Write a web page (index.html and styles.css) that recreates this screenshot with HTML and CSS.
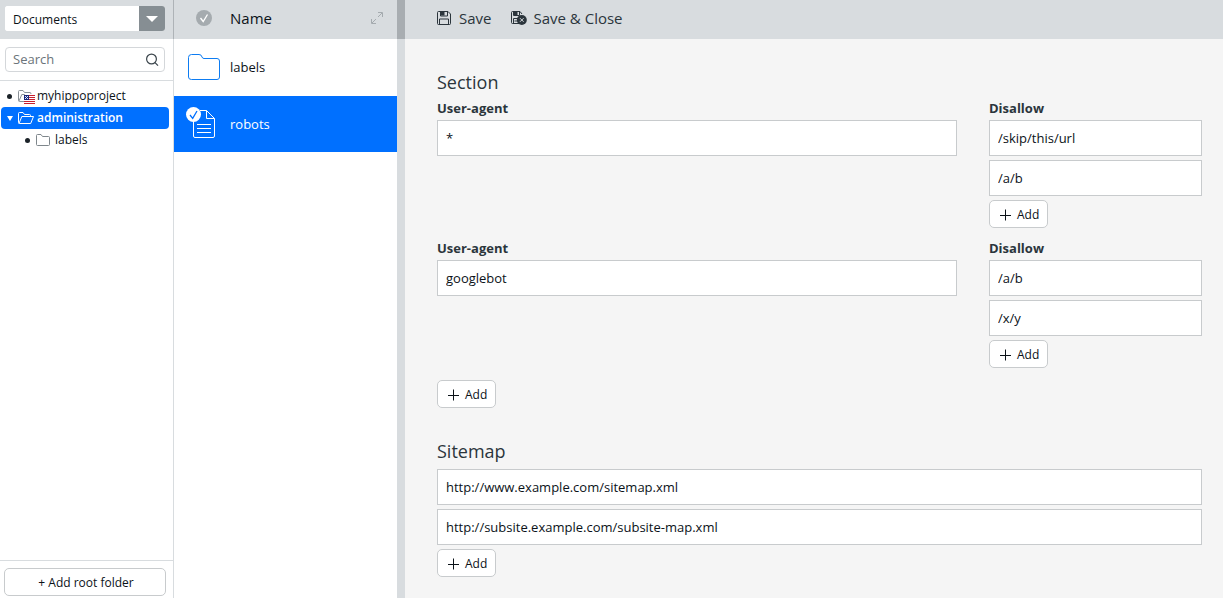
FILE: index.html
```html
<!DOCTYPE html>
<html lang="en">
<head>
<meta charset="utf-8">
<title>Documents - robots</title>
<link rel="stylesheet" href="styles.css">
</head>
<body>
<svg class="defs" aria-hidden="true">
  <symbol id="plus" viewBox="0 0 12 12"><path d="M5.500 .5v11M0 6.500h11" fill="none" stroke="currentColor"/></symbol>
  <symbol id="check" viewBox="0 0 16 16"><circle cx="8" cy="8" r="8" class="check-disc"/><path d="M4.500 8l2.700 3.500 4.300-7" class="check-mark"/></symbol>
</svg>
<div class="app">
  <aside class="sidebar">
    <header class="bar sidebar-bar">
      <div class="picker">
        <select class="picker-select" aria-label="Section"><option>Documents</option></select>
        <span class="picker-arrow"><svg width="12" height="6" viewBox="0 0 12 6"><path d="M0 0h12L6 6z" fill="#fff"/></svg></span>
      </div>
    </header>
    <form class="search">
      <input class="search-input" type="text" placeholder="Search" aria-label="Search">
      <button class="search-button" type="button" aria-label="Search"><svg width="14" height="14" viewBox="0 0 14 14" fill="none" stroke="#3a444b" stroke-width="1.2"><circle cx="6.500" cy="6" r="4.900"/><path d="M10 9.600l3 3"/></svg></button>
    </form>
    <ul class="tree">
      <li class="node">
        <span class="bullet"></span>
        <svg width="18" height="16" viewBox="0 0 18 16"><path d="M.5 12.500V3.500q0-1 1-1h3.500l1.500 2h5.500q1 0 1 1.500M1 13l2.800-6.500h3M.5 12.500q0 1 1 1h5" fill="none" stroke="#8b9298"/><rect x="6" y="7" width="11" height="9" fill="#fff"/><path d="M6 7.500h11M6 9.500h11M6 11.500h11M6 13.500h11M6 15.500h11" stroke="#c8202e"/><rect x="6" y="7" width="5" height="5" fill="#1b2a7a"/><path d="M7 8.500h1M9 8.500h1M8 9.500h1M7 10.500h1M9 10.500h1" stroke="#dfe4ff"/></svg>
        <span>myhippoproject</span>
      </li>
      <li class="node node-active">
        <svg class="caret" width="6" height="5" viewBox="0 0 6 5"><path d="M0 0h6L3 5z" fill="#fff"/></svg>
        <svg width="18" height="16" viewBox="0 0 18 16"><path d="M.5 12.500v-9q0-1 1-1h3.500l1.500 2h5q1 0 1 1v1M1 13.500l2.800-7h11.700l-2.800 7H1.500q-1 0-1-1" fill="none" stroke="#fff"/></svg>
        <span>administration</span>
      </li>
      <li class="node node-child">
        <span class="bullet"></span>
        <svg width="18" height="16" viewBox="0 0 18 16"><path d="M.5 3.500q0-1 1-1H5l1.500 2H12.500q1 0 1 1v7q0 1-1 1H1.500q-1 0-1-1z" fill="none" stroke="#7f878c"/></svg>
        <span>labels</span>
      </li>
    </ul>
    <footer class="sidebar-foot"><button class="button button-wide" type="button">+ Add root folder</button></footer>
  </aside>

  <section class="list">
    <header class="bar list-bar">
      <span class="list-icon"><svg class="check-grey" width="16" height="16"><use href="#check"/></svg></span>
      <span class="list-title">Name</span>
      <button class="icon-button" type="button" aria-label="Expand"><svg width="12" height="12" viewBox="0 0 12 12" fill="none" stroke="#a5abaf"><path d="M7 .5h4.500V5M11 1L7 5M.5 7v4.500H5M1 11l4-4"/></svg></button>
    </header>
    <ul class="rows">
      <li class="row">
        <span class="list-icon"><svg width="32" height="26" viewBox="0 0 32 26"><path d="M.5 3.500q0-3 3-3H11q2.500 0 3 2.500.500 1.500 2 1.500H29q2.500 0 2.500 2.500v16q0 2.500-2.500 2.500H3.500q-3 0-3-2.500z" fill="none" stroke="#0d7cf2"/></svg></span>
        <span>labels</span>
      </li>
      <li class="row row-active">
        <span class="list-icon"><svg width="36" height="34" viewBox="0 0 36 34"><path d="M14 3.500H20.500L28.500 11.500V29q0 1.500-1.500 1.500H9q-1.500 0-1.500-1.500V13M20.500 3.500V11.500H28.500M11 17.500h14M11 21.500h14M11 25.500h14" fill="none" stroke="#fff"/><circle cx="7.500" cy="7.500" r="7.500" fill="#fff"/><path d="M4 8l2.700 3.300L11 4" fill="none" stroke="#0070ff" stroke-width="1.300"/></svg></span>
        <span>robots</span>
      </li>
    </ul>
  </section>

  <div class="splitter"></div>

  <main class="editor">
    <header class="bar editor-bar">
      <button class="tool" type="button"><svg width="14" height="14" viewBox="0 0 14 14" fill="none" stroke="#2b353c"><path d="M1.500 .500H11L13.500 3v9.500q0 1-1 1h-11q-1 0-1-1v-11q0-1 1-1z"/><path d="M3.500 1v4h7V1M2.500 13V8h9v5"/><path d="M3.500 1h4v3.500h-4z" fill="#2b353c" stroke="none"/></svg>Save</button>
      <button class="tool tool-close" type="button"><svg width="16" height="14" viewBox="0 0 16 14" fill="none" stroke="#2b353c"><path d="M8 12.500H1.500q-1 0-1-1V1.500q0-1 1-1H9L11 3"/><path d="M2.500 1v3.500h6V1M2.500 12V7.500H8M3.500 10h3"/><path d="M3 1h3.500v3.500H3z" fill="#2b353c" stroke="none"/><circle cx="10.800" cy="9" r="5" fill="#2b353c" stroke="none"/><path d="M9 7.200l3.600 3.600M12.600 7.200L9 10.800" stroke="#d8dcdf"/></svg>Save &amp; Close</button>
    </header>
    <form class="form">
      <h2 class="heading">Section</h2>
      <div class="groups">
        <div class="group">
          <div class="field">
            <label class="label" for="agent-1">User-agent</label>
            <input class="input" id="agent-1" type="text" value="*">
          </div>
          <div class="field">
            <label class="label" for="disallow-1">Disallow</label>
            <div class="stack">
              <input class="input" id="disallow-1" type="text" value="/skip/this/url">
              <input class="input" type="text" aria-label="Disallow" value="/a/b">
              <button class="button" type="button"><svg width="12" height="12"><use href="#plus"/></svg>Add</button>
            </div>
          </div>
        </div>
        <div class="group">
          <div class="field">
            <label class="label" for="agent-2">User-agent</label>
            <input class="input" id="agent-2" type="text" value="googlebot">
          </div>
          <div class="field">
            <label class="label" for="disallow-2">Disallow</label>
            <div class="stack">
              <input class="input" id="disallow-2" type="text" value="/a/b">
              <input class="input" type="text" aria-label="Disallow" value="/x/y">
              <button class="button" type="button"><svg width="12" height="12"><use href="#plus"/></svg>Add</button>
            </div>
          </div>
        </div>
      </div>
      <button class="button" type="button"><svg width="12" height="12"><use href="#plus"/></svg>Add</button>
      <h2 class="heading heading-next">Sitemap</h2>
      <div class="stack">
        <input class="input" type="text" aria-label="Sitemap" value="http://www.example.com/sitemap.xml">
        <input class="input" type="text" aria-label="Sitemap" value="http://subsite.example.com/subsite-map.xml">
        <button class="button" type="button"><svg width="12" height="12"><use href="#plus"/></svg>Add</button>
      </div>
    </form>
  </main>
</div>
</body>
</html>
```
FILE: styles.css
```css
* { box-sizing: border-box; }
body { margin: 0; font: 13px/20px "Open Sans", sans-serif; color: #0b1218; background: #fff; }
button, input, select { font: inherit; color: inherit; }
ul { list-style: none; margin: 0; padding: 0; }
svg { display: block; flex: none; }
.defs { position: absolute; width: 0; height: 0; }

.app { display: grid; grid-template-columns: 174px 223px 8px minmax(0, 1fr); min-height: 100vh; }
.bar { display: flex; align-items: center; height: 39px; flex: none; background: #d8dcdf; }

.sidebar { display: flex; flex-direction: column; border-right: 1px solid #d8dcdf; }
.sidebar-bar { padding: 0 8px 2px 5px; margin-right: -1px; border-right: 1px solid #aeb3b7; }
.picker { display: flex; flex: 1; height: 25px; border-radius: 3px; overflow: hidden; background: #fff; }
.picker-select { flex: 1; min-width: 0; appearance: none; border: 0; padding: 2px 8px 0; font-size: 12px; background: #fff; }
.picker-arrow { display: flex; align-items: center; justify-content: center; width: 26px; background: #868e93; }
.search { display: flex; margin: 8px 8px 8px 5px; height: 25px; border: 1px solid #d4d7da; border-radius: 4px; background: #fff; }
.search-input { flex: 1; min-width: 0; border: 0; padding: 0 7px 2px; background: none; outline: 0; }
.search-input::placeholder { color: #6b747a; opacity: 1; }
.search-button { border: 0; background: none; padding: 0 5px; display: flex; align-items: center; }
.tree { flex: 1; border-top: 1px solid #d8dcdf; padding: 4px 4px 0 1px; font-size: 12px; }
.node { display: flex; align-items: center; height: 22px; padding-left: 6px; border-radius: 4px; white-space: nowrap; }
.node > svg:not(.caret) { margin-right: 1px; }
.node-active { background: #0070ff; color: #fff; font-weight: 600; }
.node-child { padding-left: 24px; }
.bullet { width: 5px; height: 5px; border-radius: 50%; background: #1b2228; margin-right: 6px; }
.caret { margin-right: 5px; }
.sidebar-foot { border-top: 1px solid #d8dcdf; padding: 7px 7px 2px 4px; }

.list { display: flex; flex-direction: column; }
.list-icon { display: flex; justify-content: center; width: 32px; margin-right: 10px; }
.list-bar { padding: 0 14px 3px; font-size: 15px; }
.list-title { flex: 1; }
.check-disc { fill: #a5abaf; }
.check-mark { fill: none; stroke: #fff; stroke-width: 1.3px; }
.icon-button { border: 0; background: none; padding: 0; }
.row { display: flex; align-items: center; height: 57px; padding: 0 14px 2px; }
.row-active { height: 56px; padding-bottom: 0; background: #0070ff; color: #fff; }

.splitter { background: linear-gradient(#a8adb1 39px, #d8dcdf 39px); }

.editor { background: #f5f5f5; }
.editor-bar { padding: 0 32px 3px; gap: 20px; }
.tool { display: flex; align-items: center; gap: 8px; padding: 0; border: 0; background: none; font-size: 15px; color: #2b353c; }
.tool-close { gap: 6px; }
.form { padding: 29px 21px 20px 32px; }
.heading { margin: 0 0 2px; font-size: 18px; line-height: 28px; font-weight: 400; color: #2b353c; }
.heading-next { margin: 29px 0 4px; }
.groups { display: flex; flex-direction: column; gap: 10px; margin-bottom: 12px; }
.group { display: grid; grid-template-columns: 520fr 213fr; gap: 32px; }
.field { display: flex; flex-direction: column; gap: 2px; min-width: 0; }
.label { font-weight: 700; color: #2b353c; }
.stack { display: flex; flex-direction: column; align-items: flex-start; gap: 4px; }
.input { width: 100%; height: 36px; padding: 0 8px; border: 1px solid #c8cbcd; border-radius: 0; background: #fff; }
.button { display: flex; align-items: center; justify-content: center; gap: 5px; height: 28px; padding: 1px 8px 0 10px; border: 1px solid #c8cbcd; border-radius: 5px; font-size: 12px; background: #fff; }
.button-wide { width: 100%; }
```
